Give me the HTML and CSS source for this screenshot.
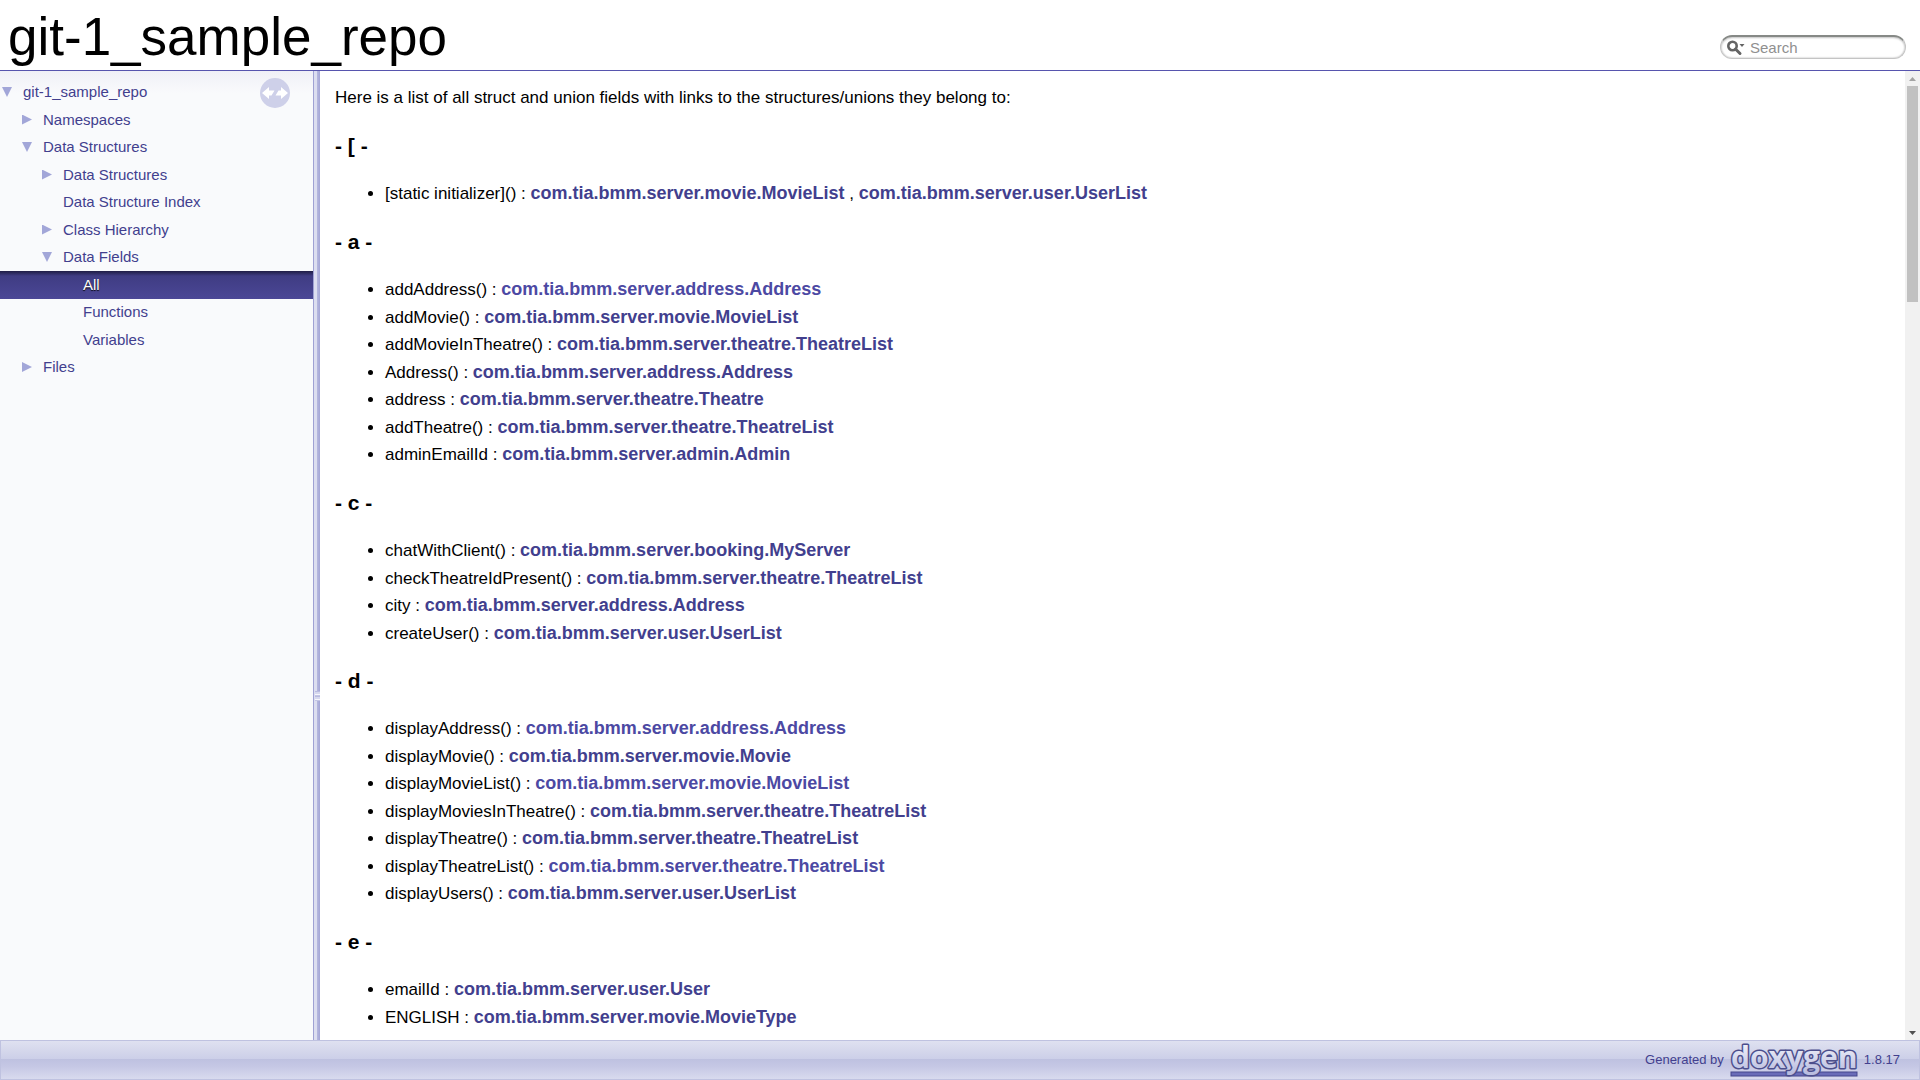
FILE: index.html
```html
<!DOCTYPE html>
<html lang="en">
<head>
<meta charset="utf-8">
<title>git-1_sample_repo: Data Fields</title>
<link rel="stylesheet" href="styles.css">
</head>
<body>
<header class="top">
  <div class="project-name">git-1_sample_repo</div>
  <form class="search" role="search">
    <svg class="search-icon" width="20" height="16" viewBox="0 0 20 16" aria-hidden="true">
      <circle cx="5.500" cy="6" r="4.200" fill="none" stroke="#646464" stroke-width="2.600"/>
      <path d="M8.500 9l4.500 4.500" stroke="#646464" stroke-width="3" stroke-linecap="round"/>
      <path d="M12.500 4h5l-2.500 3z" fill="#646464"/>
    </svg>
    <input class="search-field" type="text" placeholder="Search" aria-label="Search">
  </form>
</header>

<div class="middle">
  <nav class="side">
    <button class="sync" type="button" aria-label="Sync navigation">
      <svg width="30" height="30" viewBox="0 0 30 30" aria-hidden="true">
        <circle cx="15" cy="15" r="15" fill="#ced0e9"/>
        <path d="M2 15L9 9v3.500h5.500l-3 5H9V21z" fill="#fff"/>
        <path d="M28 15l-7 6v-3.500h-5.500l3-5H21V9z" fill="#fff"/>
      </svg>
    </button>
    <ul class="tree">
      <li class="node level-0"><span class="arrow open"></span><a href="#">git-1_sample_repo</a></li>
      <li class="node level-1"><span class="arrow shut"></span><a href="#">Namespaces</a></li>
      <li class="node level-1"><span class="arrow open"></span><a href="#">Data Structures</a></li>
      <li class="node level-2"><span class="arrow shut"></span><a href="#">Data Structures</a></li>
      <li class="node level-2"><span class="arrow"></span><a href="#">Data Structure Index</a></li>
      <li class="node level-2"><span class="arrow shut"></span><a href="#">Class Hierarchy</a></li>
      <li class="node level-2"><span class="arrow open"></span><a href="#">Data Fields</a></li>
      <li class="node level-3 selected"><span class="arrow"></span><a href="#">All</a></li>
      <li class="node level-3"><span class="arrow"></span><a href="#">Functions</a></li>
      <li class="node level-3"><span class="arrow"></span><a href="#">Variables</a></li>
      <li class="node level-1"><span class="arrow shut"></span><a href="#">Files</a></li>
    </ul>
  </nav>
  <div class="splitter"><span class="grip"></span></div>
  <main class="content">
    <p class="intro">Here is a list of all struct and union fields with links to the structures/unions they belong to:</p>

    <h3>- [ -</h3>
    <ul class="fields">
      <li>[static initializer]() : <a href="#">com.tia.bmm.server.movie.MovieList</a> , <a href="#">com.tia.bmm.server.user.UserList</a></li>
    </ul>

    <h3>- a -</h3>
    <ul class="fields">
      <li>addAddress() : <a class="fresh" href="#">com.tia.bmm.server.address.Address</a></li>
      <li>addMovie() : <a href="#">com.tia.bmm.server.movie.MovieList</a></li>
      <li>addMovieInTheatre() : <a href="#">com.tia.bmm.server.theatre.TheatreList</a></li>
      <li>Address() : <a href="#">com.tia.bmm.server.address.Address</a></li>
      <li>address : <a href="#">com.tia.bmm.server.theatre.Theatre</a></li>
      <li>addTheatre() : <a href="#">com.tia.bmm.server.theatre.TheatreList</a></li>
      <li>adminEmailId : <a href="#">com.tia.bmm.server.admin.Admin</a></li>
    </ul>

    <h3>- c -</h3>
    <ul class="fields">
      <li>chatWithClient() : <a href="#">com.tia.bmm.server.booking.MyServer</a></li>
      <li>checkTheatreIdPresent() : <a href="#">com.tia.bmm.server.theatre.TheatreList</a></li>
      <li>city : <a href="#">com.tia.bmm.server.address.Address</a></li>
      <li>createUser() : <a href="#">com.tia.bmm.server.user.UserList</a></li>
    </ul>

    <h3>- d -</h3>
    <ul class="fields">
      <li>displayAddress() : <a class="fresh" href="#">com.tia.bmm.server.address.Address</a></li>
      <li>displayMovie() : <a href="#">com.tia.bmm.server.movie.Movie</a></li>
      <li>displayMovieList() : <a class="fresh" href="#">com.tia.bmm.server.movie.MovieList</a></li>
      <li>displayMoviesInTheatre() : <a href="#">com.tia.bmm.server.theatre.TheatreList</a></li>
      <li>displayTheatre() : <a href="#">com.tia.bmm.server.theatre.TheatreList</a></li>
      <li>displayTheatreList() : <a class="fresh" href="#">com.tia.bmm.server.theatre.TheatreList</a></li>
      <li>displayUsers() : <a href="#">com.tia.bmm.server.user.UserList</a></li>
    </ul>

    <h3>- e -</h3>
    <ul class="fields">
      <li>emailId : <a href="#">com.tia.bmm.server.user.User</a></li>
      <li>ENGLISH : <a href="#">com.tia.bmm.server.movie.MovieType</a></li>
    </ul>
  </main>
  <div class="scrollbar" aria-hidden="true">
    <span class="scroll-up"></span>
    <span class="scroll-track"><span class="scroll-thumb"></span></span>
    <span class="scroll-down"></span>
  </div>
</div>

<footer class="footer">
  <span>Generated by</span>
  <a class="logo" href="#" aria-label="doxygen">
    <svg width="130" height="38" viewBox="0 0 130 38" aria-hidden="true">
      <defs>
        <linearGradient id="letter" x1="0" y1="0" x2="0" y2="1">
          <stop offset="0.200" stop-color="#f0f1f9"/>
          <stop offset="0.900" stop-color="#b9bddf"/>
        </linearGradient>
      </defs>
      <rect x="2" y="31" width="126" height="4" fill="#6a6cb8" stroke="#44468c"/>
      <text class="logo-text" x="2" y="27">doxygen</text>
    </svg>
  </a>
  <span>1.8.17</span>
</footer>
</body>
</html>
```
FILE: styles.css
```css
* {
  box-sizing: border-box;
}

body {
  margin: 0;
  height: 100vh;
  display: flex;
  flex-direction: column;
  overflow: hidden;
  background: #fff;
  color: #000;
  font: 17px/28px "Liberation Sans", Arial, sans-serif;
}

a {
  color: #423f8e;
  text-decoration: none;
}

/* Header */
.top {
  flex: none;
  display: flex;
  justify-content: space-between;
  align-items: flex-end;
  padding: 6px 14px 3px 8px;
  border-bottom: 1px solid #5755ae;
}

.project-name {
  font-size: 53px;
  line-height: 61px;
}

.search {
  display: flex;
  align-items: center;
  width: 186px;
  height: 24px;
  margin-bottom: 8px;
  padding: 0 6px;
  border: 1px solid #c4c4c4;
  border-top: 2px solid #868986;
  border-radius: 12px;
  box-shadow: inset 0 1px 2px #ccc, inset 0 0 2px #aaa;
}

.search-field {
  flex: 1;
  min-width: 0;
  padding: 1px 3px 0;
  border: 0;
  outline: 0;
  background: none;
  font: 15px/20px "Liberation Sans", Arial, sans-serif;
}

.search-field::placeholder {
  color: #909090;
}

/* Middle */
.middle {
  flex: 1;
  min-height: 0;
  display: flex;
}

.side {
  position: relative;
  flex: none;
  width: 313px;
  background: linear-gradient(#f0f0f7, #f9fafc 22px);
  font-size: 15px;
}

.sync {
  position: absolute;
  top: 7px;
  right: 23px;
  width: 30px;
  height: 30px;
  padding: 0;
  border: 0;
  background: none;
}

.sync svg {
  display: block;
}

.tree {
  margin: 0;
  padding: 7px 0 0;
  list-style: none;
}

.node {
  display: flex;
  align-items: center;
  height: 28px;
}

.node:nth-child(even) {
  height: 27px;
}

.node.selected {
  height: 28px;
  margin-bottom: -1px;
}

.level-1 {
  padding-left: 20px;
}

.level-2 {
  padding-left: 40px;
}

.level-3 {
  padding-left: 60px;
}

.arrow {
  width: 23px;
  height: 10px;
}

.arrow::before {
  content: "";
  display: block;
  width: 10px;
  height: 10px;
  margin-left: 2px;
}

.open::before {
  background: #a2a6d8;
  clip-path: polygon(0 0, 100% 0, 50% 100%);
}

.shut::before {
  background: #a2a6d8;
  clip-path: polygon(0 0, 100% 50%, 0 100%);
}

.selected {
  background: linear-gradient(#1f1d45, #3f3c83 5px, #4b4796);
}

.selected a {
  color: #fff;
  text-shadow: 0 1px 1px #000;
}

.splitter {
  flex: none;
  width: 7px;
  padding: 620px 0 0 2px;
  background: linear-gradient(90deg, #9fa1d4 1px, #dcdef0 1px, #dcdef0 4px, #b6b8df 4px, #a4a6d6);
}

.grip {
  display: block;
  width: 5px;
  height: 10px;
  background: repeating-linear-gradient(#b9bbe0 0 1px, #d6d8ee 1px 3px, #f6f6fc 3px 4px, #c4c6e5 4px 5px);
}

.content {
  flex: 1;
  min-width: 0;
  overflow: hidden;
  padding: 13px 15px 0;
}

.intro {
  margin: 0;
}

h3 {
  margin: 20px 0;
  font-size: 21px;
  line-height: 28px;
}

.fields {
  margin: 0;
  padding-left: 50px;
}

.fields li:nth-child(even) {
  line-height: 27px;
}

.fields a {
  font-size: 18px;
  font-weight: bold;
  line-height: 20px;
}

.fields .fresh {
  color: #4c49a3;
}

/* Scrollbar */
.scrollbar {
  flex: none;
  display: flex;
  flex-direction: column;
  width: 15px;
  background: #f1f1f1;
}

.scroll-up,
.scroll-down {
  height: 15px;
  padding: 6px 4px;
}

.scroll-up::before,
.scroll-down::before {
  content: "";
  display: block;
  width: 7px;
  height: 4px;
  background: #a3a3a3;
  clip-path: polygon(50% 0, 100% 100%, 0 100%);
}

.scroll-down::before {
  background: #505050;
  clip-path: polygon(0 0, 100% 0, 50% 100%);
}

.scroll-track {
  flex: 1;
  padding: 0 2px;
}

.scroll-thumb {
  display: block;
  height: 23%;
  background: #c1c1c1;
}

/* Footer */
.footer {
  flex: none;
  display: flex;
  justify-content: flex-end;
  align-items: center;
  gap: 5px;
  height: 40px;
  padding-right: 19px;
  border: 1px solid #bfc2e0;
  background: linear-gradient(#dfe1f0, #cccfe8 18px, #bec1e0 18px, #c6c8e5 26px, #d8daee);
  color: #423f8e;
  font-size: 13px;
}

.logo svg {
  display: block;
  overflow: visible;
}

.logo-text {
  font: bold 30px "Open Sans", "Noto Sans", sans-serif;
  fill: url(#letter);
  stroke: #4c4f8c;
  stroke-width: 3px;
  stroke-linejoin: round;
  paint-order: stroke;
}
```
